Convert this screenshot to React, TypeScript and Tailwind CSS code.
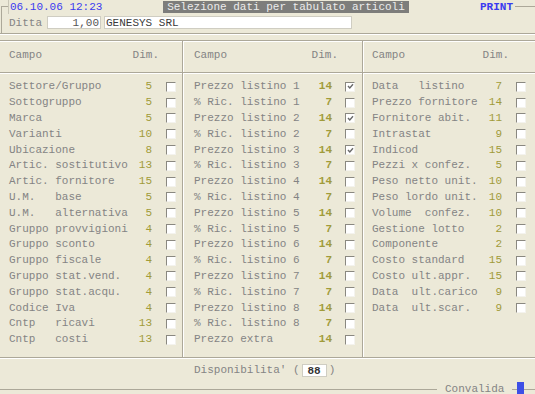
import React from 'react'

type Row = [string, string, boolean?]

const col1: Row[] = [
  ['Settore/Gruppo', '5'],
  ['Sottogruppo', '5'],
  ['Marca', '5'],
  ['Varianti', '10'],
  ['Ubicazione', '8'],
  ['Artic. sostitutivo', '13'],
  ['Artic. fornitore', '15'],
  ['U.M.   base', '5'],
  ['U.M.   alternativa', '5'],
  ['Gruppo provvigioni', '4'],
  ['Gruppo sconto', '4'],
  ['Gruppo fiscale', '4'],
  ['Gruppo stat.vend.', '4'],
  ['Gruppo stat.acqu.', '4'],
  ['Codice Iva', '4'],
  ['Cntp   ricavi', '13'],
  ['Cntp   costi', '13'],
]

const col2: Row[] = [
  ['Prezzo listino 1', '14', true],
  ['% Ric. listino 1', '7'],
  ['Prezzo listino 2', '14', true],
  ['% Ric. listino 2', '7'],
  ['Prezzo listino 3', '14', true],
  ['% Ric. listino 3', '7'],
  ['Prezzo listino 4', '14'],
  ['% Ric. listino 4', '7'],
  ['Prezzo listino 5', '14'],
  ['% Ric. listino 5', '7'],
  ['Prezzo listino 6', '14'],
  ['% Ric. listino 6', '7'],
  ['Prezzo listino 7', '14'],
  ['% Ric. listino 7', '7'],
  ['Prezzo listino 8', '14'],
  ['% Ric. listino 8', '7'],
  ['Prezzo extra', '14'],
]

const col3: Row[] = [
  ['Data   listino', '7'],
  ['Prezzo fornitore', '14'],
  ['Fornitore abit.', '11'],
  ['Intrastat', '9'],
  ['Indicod', '15'],
  ['Pezzi x confez.', '5'],
  ['Peso netto unit.', '10'],
  ['Peso lordo unit.', '10'],
  ['Volume  confez.', '10'],
  ['Gestione lotto', '2'],
  ['Componente', '2'],
  ['Costo standard', '15'],
  ['Costo ult.appr.', '15'],
  ['Data  ult.carico', '9'],
  ['Data  ult.scar.', '9'],
]

function Check({ checked }: { checked?: boolean }) {
  return (
    <span className="flex h-[10px] w-[10px] shrink-0 items-center justify-center border border-t-[#8a8880] border-l-[#8a8880] border-r-[#f4f3ee] border-b-[#f4f3ee] bg-white">
      {checked && (
        <svg width="7" height="7" viewBox="0 0 7 7">
          <path d="M1 3 L2.8 5 L6 1.2" stroke="#6a6a6a" strokeWidth="1.4" fill="none" />
        </svg>
      )}
    </span>
  )
}

function Column({ rows, className, pl, pr, gap, bold }: { rows: Row[]; className: string; pl: string; pr: string; gap: string; bold?: boolean }) {
  return (
    <div className={className}>
      <div className={`flex h-[32px] items-center pb-[2px] border-b border-[#aca899] ${pl} ${pr}`}>
        <span className="flex-1">Campo</span>
        <span className="mr-[7px]">Dim.</span>
        <span className="w-[10px]" />
      </div>
      <div className="border-t border-white pt-[5px]">
        {rows.map(([label, dim, checked]) => (
          <div key={label} className={`flex h-[15.8px] items-center ${pl} ${pr}`}>
            <span className="flex-1 whitespace-pre">{label}</span>
            <span className={`w-[20px] text-right text-[#a19b3a] ${bold ? 'font-bold' : ''}`}>{dim}</span>
            <span className={gap}>
              <Check checked={checked} />
            </span>
          </div>
        ))}
      </div>
    </div>
  )
}

export default function App() {
  return (
    <div className="h-[394px] w-[535px] overflow-hidden bg-[#ece9d8] font-['Liberation_Mono','Courier_New',monospace] text-[11px] leading-none text-[#848484]">
      {/* testata */}
      <div className="h-[34px] border-b border-[#aca899] shadow-[0_1px_0_#fff]">
        <div className="flex h-[15px] items-start">
          <div className="mt-[6px] ml-[1px] h-[9px] w-[7px] border-l border-t border-[#aca899]" />
          <div className="h-[14px] w-[94px] whitespace-nowrap border-l border-[#c9c6b6] pl-[1px] leading-[14px] text-[#3a3af0]">06.10.06 12:23</div>
          <div className="ml-[61px] mt-[1px] h-[12px] w-[246px] whitespace-nowrap bg-[#7d7d7b] text-center leading-[12px] text-[#ececec]">Selezione dati per tabulato articoli</div>
          <div className="ml-[71px] mt-[1px] leading-[12px] font-bold text-[#3a3af0]">PRINT</div>
          <div className="mt-[6px] ml-[2px] flex-1 border-t border-[#aca899]" />
        </div>
        <div className="ml-[1px] flex h-[18px] items-start border-l border-[#aca899] pt-[1px]">
          <span className="ml-[7px] mt-[2px] w-[33px]">Ditta</span>
          <span className="ml-[5px] h-[13px] w-[54px] border border-[#cfcdc2] bg-white pr-[1px] text-right leading-[12px] text-[#555]">1,00</span>
          <span className="ml-[3px] h-[13px] w-[248px] border border-[#cfcdc2] bg-white pl-[1px] leading-[12px] text-[#3a3a3a]">GENESYS SRL</span>
        </div>
      </div>

      {/* colonne */}
      <div className="mt-[6px] flex h-[318px] border-y border-[#aca899]">
        <Column rows={col1} className="w-[183px] border-r border-[#aca899] shadow-[inset_0_1px_0_#fff]" pl="pl-[9px]" pr="pr-[6px]" gap="ml-[14px]" />
        <Column rows={col2} className="w-[180px] border-r border-[#aca899] shadow-[inset_1px_1px_0_#fff]" pl="pl-[11px]" pr="pr-[7px]" gap="ml-[13px]" bold />
        <Column rows={col3} className="flex-1 shadow-[inset_1px_1px_0_#fff]" pl="pl-[9px]" pr="pr-[9px]" gap="ml-[14px]" />
      </div>

      {/* disponibilita */}
      <div className="flex h-[24px] items-center border-t border-white pl-[194px]">
        <span className="whitespace-pre">Disponibilita' (</span>
        <span className="ml-[2px] h-[13px] w-[25px] border border-[#cfcdc2] bg-white text-center font-bold leading-[12px] text-[#333]">88</span>
        <span className="ml-[2px]">)</span>
      </div>

      {/* convalida */}
      <div className="flex h-[12px] items-start">
        <div className="mt-[7px] w-[437px] border-t border-[#aca899]" />
        <span className="ml-[8px] mt-[2px] leading-[11px]">Convalida</span>
        <div className="mt-[7px] ml-[8px] w-[5px] border-t border-[#aca899]" />
        <div className="h-[12px] w-[7px] bg-[#3d4fe6]" />
        <div className="mt-[7px] flex-1 border-t border-[#aca899]" />
      </div>
    </div>
  )
}
